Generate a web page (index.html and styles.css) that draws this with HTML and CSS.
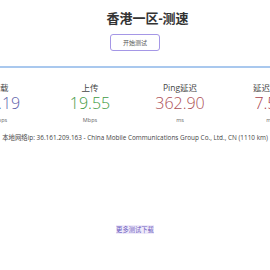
FILE: index.html
```html
<!DOCTYPE html>
<html lang="zh">
<head>
    <meta charset="UTF-8">
    <meta name="viewport" content="width=device-width, initial-scale=1.0">
    <title>香港一区-测速</title>
    <link rel="stylesheet" href="styles.css">
</head>
<body>

    <!-- 标题和按钮 -->
    <div class="header">
        <h1 class="title">香港一区-测速</h1>
        <button class="start-btn">开始测试</button>
    </div>

    <div class="divider"></div>

    <!-- 测速结果 -->
    <div class="stats">
        <div class="stat">
            <div class="label">下载</div>
            <div class="value download">42.19</div>
            <div class="unit">Mbps</div>
        </div>
        <div class="stat">
            <div class="label">上传</div>
            <div class="value upload">19.55</div>
            <div class="unit">Mbps</div>
        </div>
        <div class="stat">
            <div class="label">Ping延迟</div>
            <div class="value ping">362.90</div>
            <div class="unit">ms</div>
        </div>
        <div class="stat">
            <div class="label">延迟抖动</div>
            <div class="value jitter">7.58</div>
            <div class="unit">ms</div>
        </div>
    </div>

    <div class="ip-info">本地网络ip: 36.161.209.163 - China Mobile Communications Group Co., Ltd., CN (1110 km)</div>

    <div class="more">
        <a href="#" class="more-link">更多测试下载</a>
    </div>

</body>
</html>
```

FILE: styles.css
```css
* {
    margin: 0;
    padding: 0;
    box-sizing: border-box;
}

body {
    font-family: "Open Sans", "Noto Sans CJK SC", sans-serif;
    background-color: #fff;
    color: #333;
    overflow: hidden;
}

.header {
    text-align: center;
    padding-top: 10px;
}

.title {
    font-size: 13px;
    line-height: 16px;
    font-weight: bold;
    color: #333;
    padding-left: 25px;
}

.start-btn {
    margin-top: 8px;
    width: 50px;
    height: 17px;
    font-family: "Open Sans", "Noto Sans CJK SC", sans-serif;
    font-size: 6px;
    color: #555;
    background-color: #fff;
    border: 1px solid #a597e6;
    border-radius: 3px;
    cursor: pointer;
}

.divider {
    margin-top: 15px;
    border-top: 2px solid #a9c8ee;
}

.stats {
    display: flex;
    justify-content: center;
    padding-top: 14px;
}

.stat {
    width: 90px;
    flex-shrink: 0;
    text-align: center;
}

.label {
    font-size: 8.5px;
    line-height: 11px;
    color: #444;
}

.value {
    font-size: 16px;
    line-height: 20px;
    font-weight: 300;
}

.download {
    color: #5c5ea8;
}

.upload {
    color: #3f9a43;
}

.ping {
    color: #ad4f55;
}

.jitter {
    color: #a8404a;
}

.unit {
    margin-top: 3px;
    font-size: 5.5px;
    line-height: 8px;
    color: #666;
}

.ip-info {
    margin-top: 9px;
    font-size: 6.4px;
    line-height: 10px;
    color: #444;
    white-space: nowrap;
    display: flex;
    justify-content: center;
}

.more {
    margin-top: 72px;
    text-align: center;
}

.more-link {
    font-size: 6.3px;
    line-height: 10px;
    color: #6c5cc0;
    background-color: #efeafa;
    text-decoration: none;
}
```
